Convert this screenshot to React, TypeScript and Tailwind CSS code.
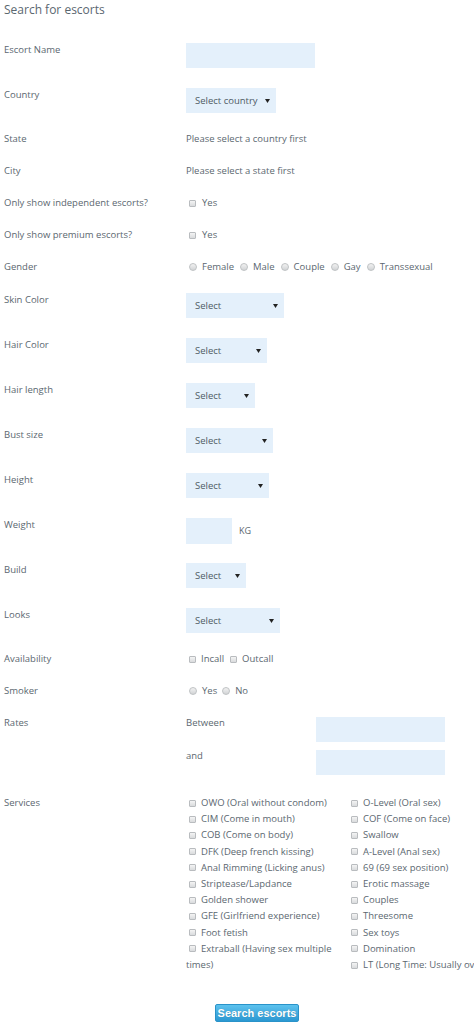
import React from "react";

const label = "w-[186px] shrink-0 pl-[4px] text-[9.5px] leading-[12px] text-[#5b6770]";

function Check() {
  return (
    <span className="inline-block w-[7px] h-[7px] shrink-0 border border-[#b9bcbf] bg-gradient-to-b from-[#f4f4f4] to-[#d9dbdd] rounded-[1px] align-[-0.5px]" />
  );
}

function Radio() {
  return (
    <span className="inline-block w-[8px] h-[8px] shrink-0 border border-[#bfc2c4] bg-gradient-to-b from-[#f2f2f2] to-[#d2d4d6] rounded-full align-[-0.5px]" />
  );
}

function Select({ text, width }: { text: string; width: string }) {
  return (
    <div className={`${width} h-[25px] bg-[#e4f0fb] flex items-center justify-between pl-[9px] pr-[6px] text-[9.5px] text-[#4f5b64]`}>
      <span>{text}</span>
      <svg width="5" height="4" viewBox="0 0 5 4">
        <path d="M0 0 L5 0 L2.5 4 Z" fill="#222" />
      </svg>
    </div>
  );
}

function Row({ name, children, tall }: { name: string; children?: React.ReactNode; tall?: boolean }) {
  return (
    <div className={`flex ${tall ? "h-[45px]" : "h-[32px]"}`}>
      <div className={`${label} ${tall ? "pt-[1px]" : ""}`}>{name}</div>
      <div className="flex-1 text-[9.5px] leading-[12px] text-[#5b6770]">{children}</div>
    </div>
  );
}

const leftServices = [
  "OWO (Oral without condom)",
  "CIM (Come in mouth)",
  "COB (Come on body)",
  "DFK (Deep french kissing)",
  "Anal Rimming (Licking anus)",
  "Striptease/Lapdance",
  "Golden shower",
  "GFE (Girlfriend experience)",
  "Foot fetish",
  "Extraball (Having sex multiple times)",
];

const rightServices = [
  "O-Level (Oral sex)",
  "COF (Come on face)",
  "Swallow",
  "A-Level (Anal sex)",
  "69 (69 sex position)",
  "Erotic massage",
  "Couples",
  "Threesome",
  "Sex toys",
  "Domination",
  "LT (Long Time: Usually over 3 hours)",
];

export default function App() {
  return (
    <div className="w-[474px] h-[1030px] overflow-hidden bg-white font-['Open_Sans',sans-serif]">
      <h1 className="pl-[4px] pt-[2px] text-[12px] leading-[15px] text-[#5b6770]">Search for escorts</h1>

      <div className="mt-[26px]">
        <Row name="Escort Name" tall>
          <div className="w-[129px] h-[25px] bg-[#e4f0fb]" />
        </Row>
        <Row name="Country" tall>
          <Select text="Select country" width="w-[90px]" />
        </Row>
        <Row name="State">Please select a country first</Row>
        <Row name="City">Please select a state first</Row>
        <Row name="Only show independent escorts?">
          <span className="flex items-center gap-[6px] pl-[3px]">
            <Check /> Yes
          </span>
        </Row>
        <Row name="Only show premium escorts?">
          <span className="flex items-center gap-[6px] pl-[3px]">
            <Check /> Yes
          </span>
        </Row>
        <Row name="Gender">
          <span className="flex items-center pl-[3px]">
            {["Female", "Male", "Couple", "Gay", "Transsexual"].map((g) => (
              <span key={g} className="flex items-center gap-[5px] mr-[6px]">
                <Radio /> {g}
              </span>
            ))}
          </span>
        </Row>
        <Row name="Skin Color" tall>
          <Select text="Select" width="w-[98px]" />
        </Row>
        <Row name="Hair Color" tall>
          <Select text="Select" width="w-[81px]" />
        </Row>
        <Row name="Hair length" tall>
          <Select text="Select" width="w-[69px]" />
        </Row>
        <Row name="Bust size" tall>
          <Select text="Select" width="w-[87px]" />
        </Row>
        <Row name="Height" tall>
          <Select text="Select" width="w-[83px]" />
        </Row>
        <Row name="Weight" tall>
          <div className="flex items-center gap-[7px]">
            <div className="w-[46px] h-[26px] bg-[#e4f0fb]" />
            <span className="text-[9px]">KG</span>
          </div>
        </Row>
        <Row name="Build" tall>
          <Select text="Select" width="w-[60px]" />
        </Row>
        <Row name="Looks" tall>
          <Select text="Select" width="w-[94px]" />
        </Row>
        <Row name="Availability">
          <span className="flex items-center pl-[3px]">
            <Check />
            <span className="ml-[5px] mr-[6px]">Incall</span>
            <Check />
            <span className="ml-[5px]">Outcall</span>
          </span>
        </Row>
        <Row name="Smoker">
          <span className="flex items-center pl-[3px]">
            <Radio />
            <span className="ml-[5px] mr-[5px]">Yes</span>
            <Radio />
            <span className="ml-[5px]">No</span>
          </span>
        </Row>
        <div className="flex h-[78px]">
          <div className={label}>Rates</div>
          <div className="flex flex-col gap-[8px] text-[9.5px] leading-[12px] text-[#5b6770]">
            <div className="flex">
              <span className="w-[130px]">Between</span>
              <div className="w-[129px] h-[25px] bg-[#e4f0fb]" />
            </div>
            <div className="flex">
              <span className="w-[130px]">and</span>
              <div className="w-[129px] h-[25px] bg-[#e4f0fb]" />
            </div>
          </div>
        </div>
        <div className="flex">
          <div className={`${label} pt-[2px]`}>Services</div>
          <div className="flex text-[9.5px] leading-[16.2px] text-[#5b6770]">
            <ul className="w-[162px] shrink-0 pr-[6px]">
              {leftServices.map((s) => (
                <li key={s}>
                  <span className="pl-[3px] pr-[5px]">
                    <Check />
                  </span>
                  {s}
                </li>
              ))}
            </ul>
            <ul className="whitespace-nowrap">
              {rightServices.map((s) => (
                <li key={s}>
                  <span className="pl-[3px] pr-[5px]">
                    <Check />
                  </span>
                  {s}
                </li>
              ))}
            </ul>
          </div>
        </div>
      </div>

      <div className="pl-[215px] mt-[26px]">
        <button className="w-[84px] h-[18px] rounded-[2px] bg-gradient-to-b from-[#5cc2ee] to-[#2a98d2] border border-[#2a93c9] text-white text-[11px] leading-[16px] font-bold font-['Liberation_Sans',sans-serif] [text-shadow:0_0_1px_rgba(0,0,0,0.25)]">
          Search escorts
        </button>
      </div>
    </div>
  );
}
